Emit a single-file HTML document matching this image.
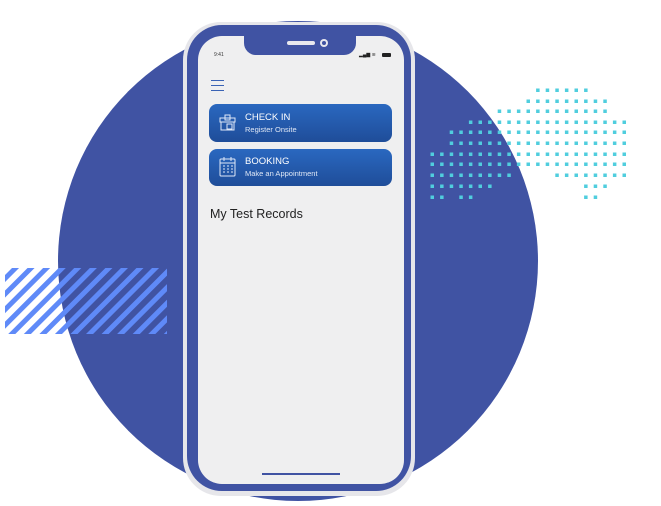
<!DOCTYPE html><html><head><style>
body{margin:0;width:661px;height:506px;background:#fff;position:relative;overflow:hidden;font-family:"Liberation Sans",sans-serif}
.a{position:absolute}
</style></head><body>
<div class="a" style="left:58px;top:21px;width:480px;height:480px;border-radius:50%;background:#4053a3"></div>
<svg class="a" style="left:0;top:0" width="661" height="506">
<defs><pattern id="st" width="11" height="11" patternUnits="userSpaceOnUse" patternTransform="rotate(45)"><rect width="5" height="11" fill="#5f8af8"/></pattern></defs>
<rect x="5" y="268" width="162" height="66" fill="url(#st)"/>
<g fill="#50cede" id="dots"></g>
</svg>
<!-- phone -->
<div class="a" style="left:183px;top:22px;width:232px;height:474px;border-radius:38px;background:#e6e6ea"></div>
<div class="a" style="left:187px;top:25px;width:224px;height:466px;border-radius:35px;background:#4053a3"></div>
<div class="a" style="left:198px;top:36px;width:206px;height:448px;border-radius:24px;background:#efeff0"></div>
<div class="a" style="left:244px;top:30px;width:112px;height:25px;border-radius:0 0 12px 12px;background:#4053a3"></div>
<div class="a" style="left:287px;top:41px;width:28px;height:4px;border-radius:2px;background:#e8e8ee"></div>
<div class="a" style="left:320px;top:39px;width:8px;height:8px;border-radius:50%;background:#e8e8ee"></div>
<div class="a" style="left:322px;top:41px;width:4px;height:4px;border-radius:50%;background:#4053a3"></div>
<div class="a" style="left:214px;top:52px;font-size:5px;color:#333">9:41</div>
<div class="a" style="left:359px;top:52px;width:20px;height:5px;font-size:5px;color:#222">▂▄▆ ≋</div>
<div class="a" style="left:382px;top:53px;width:9px;height:4px;background:#222;border-radius:1px"></div>
<div class="a" style="left:211px;top:80px;width:13px;height:1px;background:#3a63b5;box-shadow:0 5px 0 #3a63b5,0 10px 0 #3a63b5"></div>
<div class="a" style="left:209px;top:104px;width:183px;height:38px;border-radius:8px;background:linear-gradient(#2a68c0,#1f4d99)"></div>
<div class="a" style="left:209px;top:149px;width:183px;height:37px;border-radius:8px;background:linear-gradient(#2a68c0,#1f4d99)"></div>
<svg class="a" style="left:218px;top:113px" width="20" height="20" fill="none" stroke="#dfe8f8" stroke-width="1"><rect x="2" y="5" width="15" height="4"/><rect x="3" y="9" width="13" height="8"/><rect x="7" y="2" width="5" height="5"/><rect x="9" y="11" width="5" height="5"/></svg>
<svg class="a" style="left:218px;top:156px" width="20" height="22" fill="none" stroke="#dfe8f8" stroke-width="1"><rect x="2" y="3" width="15" height="17" rx="1"/><line x1="2" y1="7" x2="17" y2="7"/><path d="M5 10h2M9 10h2M13 10h2M5 13h2M9 13h2M13 13h2M5 16h2M9 16h2M13 16h2M6 1v4M13 1v4"/></svg>
<div class="a" style="left:245px;top:112px;font-size:9.5px;color:#fff">CHECK IN</div>
<div class="a" style="left:245px;top:125px;font-size:7.5px;color:#dfe7f5">Register Onsite</div>
<div class="a" style="left:245px;top:156px;font-size:9.5px;color:#fff">BOOKING</div>
<div class="a" style="left:245px;top:169px;font-size:7.5px;color:#dfe7f5">Make an Appointment</div>
<div class="a" style="left:210px;top:207px;font-size:12.5px;color:#222">My Test Records</div>
<div class="a" style="left:262px;top:473px;width:78px;height:2px;background:#4053a3"></div>
<script>
var rows=[[90,[[11,16]]],[101,[[10,18]]],[111,[[7,18]]],[122,[[4,20]]],[132,[[2,20]]],[143,[[2,20]]],[154,[[0,20]]],[164,[[0,20]]],[175,[[0,8],[13,20]]],[186,[[0,6],[16,18]]],[197,[[0,1],[3,4],[16,17]]]];
var s='';rows.forEach(function(r){r[1].forEach(function(g){for(var i=g[0];i<=g[1];i++){s+='<rect x="'+(430.5+9.6*i)+'" y="'+(r[0]-1.5)+'" width="3.5" height="3.5"/>';}})});
document.getElementById('dots').innerHTML=s;
</script>
</body></html>
